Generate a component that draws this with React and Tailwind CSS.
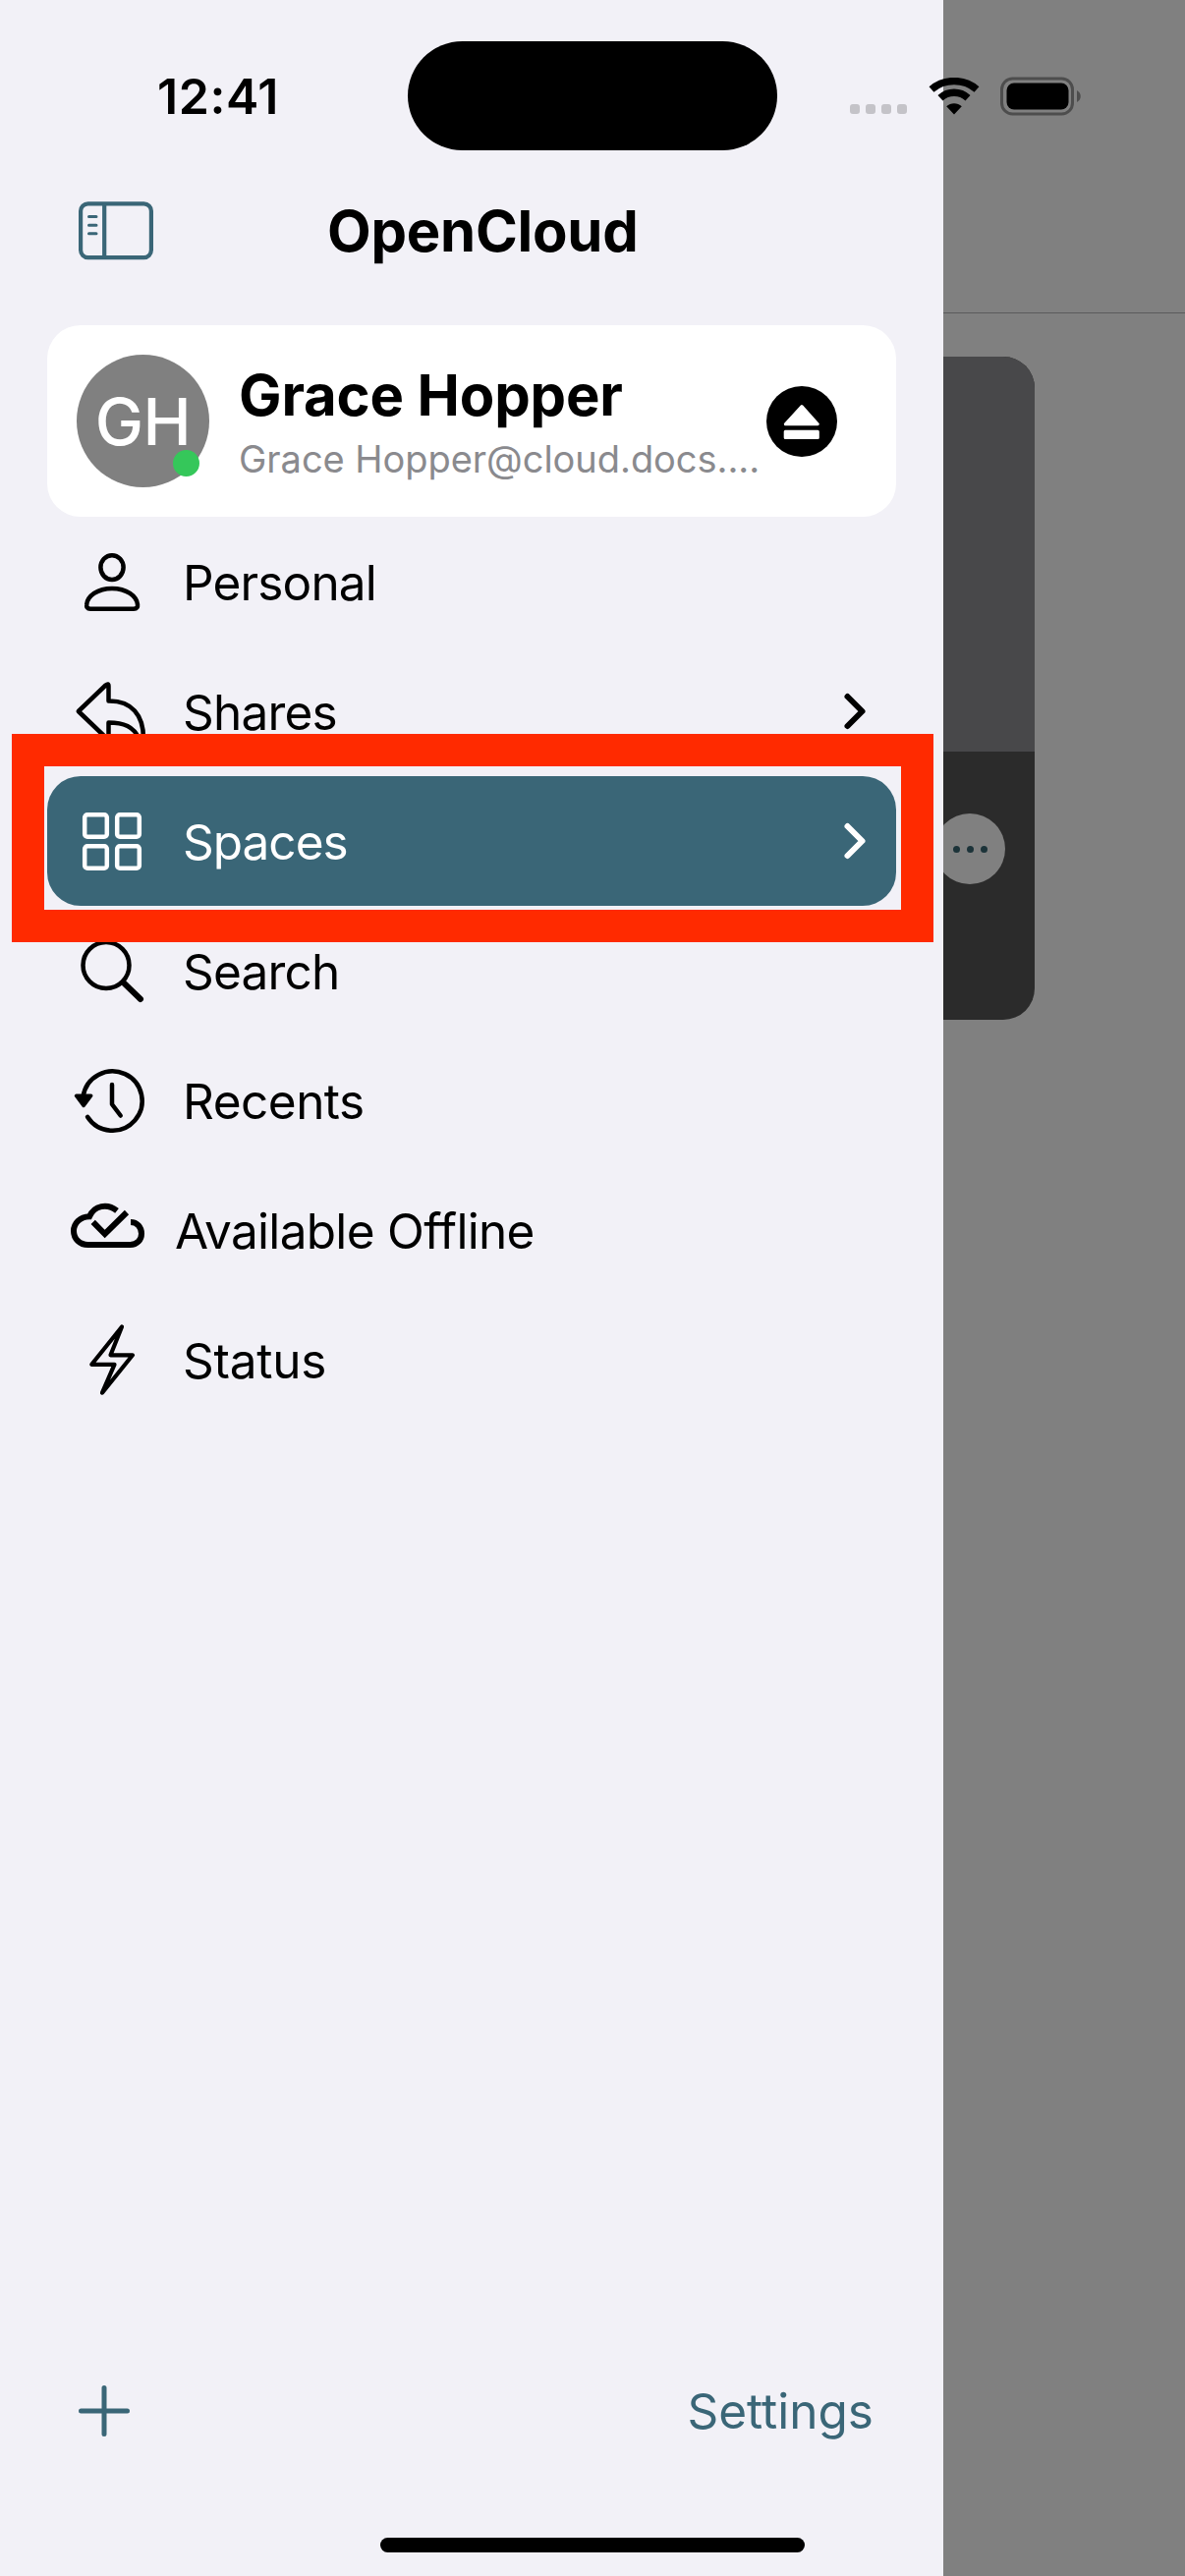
const stroke = {
  fill: "none",
  stroke: "currentColor",
  strokeWidth: 4.5,
  strokeLinecap: "round",
  strokeLinejoin: "round",
};

function Glyph({ children, className = "" }) {
  return (
    <svg viewBox="0 0 84 84" className={`h-[84px] w-[84px] shrink-0 ${className}`} {...stroke}>
      {children}
    </svg>
  );
}

const icons = {
  personal: (
    <Glyph>
      <ellipse cx="42" cy="27.6" rx="11.600" ry="12.4" />
      <path d="M20 69.700H64c3.500 0 4.300-2 4-4.500C67 57 57 48.900 42 48.900S17 57 16.200 65.200c-.3 2.500.5 4.500 3.800 4.500z" />
    </Glyph>
  ),
  shares: (
    <Glyph>
      <path d="M7.800 42 35.500 15.500q3-2.500 3 1V31.500C62 31 74 46 74 69.500c0 4-3 4-4.500.5C64 57.500 54 53.500 38.500 53.500V67.500q0 3.500-3 1z" />
    </Glyph>
  ),
  spaces: (
    <Glyph className="text-white">
      <rect x="14.200" y="15.200" width="22.600" height="22.600" rx="2.800" />
      <rect x="47.200" y="15.200" width="22.600" height="22.600" rx="2.800" />
      <rect x="14.200" y="47.200" width="22.600" height="22.600" rx="2.800" />
      <rect x="47.200" y="47.200" width="22.600" height="22.600" rx="2.800" />
    </Glyph>
  ),
  search: (
    <Glyph>
      <circle cx="36" cy="36.500" r="23.500" />
      <path d="M53.500 54 71 71" strokeWidth="6" />
    </Glyph>
  ),
  recents: (
    <Glyph>
      <path d="M12.600 38A30.200 30.200 0 1 1 17 58.800" />
      <path d="M42 26v20l8.700 11.500" />
      <path d="M5.500 37.300h15.200L13.100 47.500z" fill="currentColor" strokeWidth="3.500" />
    </Glyph>
  ),
  offline: (
    <Glyph>
      <g strokeWidth="6" strokeLinecap="butt" strokeLinejoin="miter">
        <path d="M47 22.300C37 14.500 24 17 19 28.300 9 28.500 3 35.500 3 43c0 8 6.300 14 14.500 14h43C67.500 57 72 52 72 45.700 72 39 67.500 34 61 34" />
        <path d="M22.700 33.800 34.700 46 57 24" />
      </g>
    </Glyph>
  ),
  status: (
    <Glyph>
      <path d="M52 8.500 21.300 46.800H44.500L32 75.700 63 37.300H40.500z" strokeWidth="4.200" />
    </Glyph>
  ),
};

const items = [
  { id: "personal", label: "Personal", text: "ml-[30px] tracking-[-0.85px]" },
  { id: "shares", label: "Shares", text: "ml-[30px] tracking-[-0.8px]", chevron: true },
  { id: "spaces", label: "Spaces", text: "ml-[30px] tracking-[-1px]", chevron: true, active: true },
  { id: "search", label: "Search", text: "ml-[30px] tracking-[-0.8px]" },
  { id: "recents", label: "Recents", text: "ml-[30px] tracking-[-0.5px]" },
  { id: "offline", label: "Available Offline", text: "ml-[22px] tracking-[-0.7px]" },
  { id: "status", label: "Status", text: "ml-[30px] tracking-[-0.25px]" },
];

function Row({ item }) {
  return (
    <li
      className={`flex h-[132px] items-center rounded-[34px] pl-[24px] pr-[29px] ${
        item.active ? "bg-[#3a6677] text-white" : "text-black"
      }`}
    >
      {icons[item.id]}
      <span className={`mt-[4px] flex-1 whitespace-nowrap text-[49.5px] leading-none ${item.text}`}>
        {item.label}
      </span>
      {item.chevron && (
        <svg viewBox="0 0 26 40" className="h-[40px] w-[26px]" {...stroke} strokeWidth="6">
          <path d="M5.500 5 20.500 20 5.500 35" />
        </svg>
      )}
    </li>
  );
}

function AccountCard() {
  return (
    <section className="mx-[48px] flex h-[195px] items-center rounded-[34px] bg-white pl-[30px] pr-[60px]">
      <div className="relative flex size-[135px] shrink-0 items-center justify-center rounded-full bg-[#808080]">
        <span className="mt-px text-[66px] font-medium leading-none tracking-[-0.5px] text-white">GH</span>
        <i className="absolute bottom-[11px] right-[10px] size-[27px] rounded-full bg-[#35c75a]" />
      </div>
      <div className="ml-[30px] mt-[4px] flex w-[537px] flex-col">
        <span className="whitespace-nowrap text-[58px] font-bold leading-[72px] tracking-[-0.15px]">Grace Hopper</span>
        <span className="whitespace-nowrap text-[38px] leading-[58px] tracking-[-0.04px] text-[#8a8a8e]">
          Grace Hopper@cloud.docs....
        </span>
      </div>
      <svg viewBox="0 0 72 72" className="size-[72px] shrink-0">
        <circle cx="36" cy="36" r="36" />
        <g fill="#fff" stroke="#fff" strokeWidth="3" strokeLinejoin="round">
          <path d="M36 20.500 52.300 38.700H19.300z" />
          <path d="M19.200 46.300h33.100v6.200H19.200z" />
        </g>
      </svg>
    </section>
  );
}

function Drawer() {
  return (
    <aside className="flex h-full w-[960px] shrink-0 flex-col bg-[#f2f1f7]">
      <header className="mt-[188px] flex h-[94px] items-center pl-[80px]">
        <svg viewBox="0 0 76 60" className="h-[60px] w-[76px] text-[#3a6677]" {...stroke} strokeWidth="4.200">
          <rect x="2.100" y="2.300" width="71.800" height="54.800" rx="7.500" />
          <path d="M26.200 3v54" />
          <path d="M10.500 15.500h7.500M10.500 24.200h7.500M10.500 32.700h7.500" strokeWidth="3" />
        </svg>
        <h1 className="ml-[177px] whitespace-nowrap text-[58px] font-bold leading-none tracking-[-0.25px]">OpenCloud</h1>
      </header>
      <div className="h-[49px]" />
      <AccountCard />
      <ul className="mx-[48px] flex flex-1 flex-col">
        {items.map((item) => (
          <Row key={item.id} item={item} />
        ))}
      </ul>
      <footer className="mb-[108px] flex h-[120px] items-center justify-between pl-[80px] pr-[71px] text-[#3a6677]">
        <svg viewBox="0 0 52 52" className="size-[52px]" {...stroke} strokeWidth="5">
          <path d="M26 2.500v47M2.500 26h47" />
        </svg>
        <span className="mt-[2px] text-[49.5px] leading-none">Settings</span>
      </footer>
    </aside>
  );
}

function DimmedContent() {
  return (
    <main className="h-full flex-1 overflow-hidden bg-[#808080]">
      <div className="h-[319px] border-b border-[#5a5a5c]" />
      <div className="mt-[44px] h-[675px] w-[93px] overflow-hidden rounded-r-[32px] bg-[#2b2b2b]">
        <div className="h-[402px] bg-[#48484a]" />
        <div className="-ml-[9px] mt-[63px] flex size-[72px] items-center justify-center gap-[7px] rounded-full bg-[#808080]">
          <i className="size-[7px] rounded-full bg-[#1c3339]" />
          <i className="size-[7px] rounded-full bg-[#1c3339]" />
          <i className="size-[7px] rounded-full bg-[#1c3339]" />
        </div>
      </div>
    </main>
  );
}

function StatusBar() {
  return (
    <div className="absolute inset-x-0 top-0 flex h-[194px] items-center">
      <span className="ml-[160px] mt-[2px] w-[255px] text-[50px] font-semibold leading-none tracking-[0.6px]">12:41</span>
      <div className="h-[111px] w-[376px] rounded-[56px] bg-black" />
      <div className="ml-[74px] mt-[28px] flex gap-[6px]">
        <i className="h-[10px] w-[10px] rounded-[3px] bg-[#c4c3c8]" />
        <i className="h-[10px] w-[10px] rounded-[3px] bg-[#c4c3c8]" />
        <i className="h-[10px] w-[10px] rounded-[3px] bg-[#c4c3c8]" />
        <i className="h-[10px] w-[10px] rounded-[3px] bg-[#c4c3c8]" />
      </div>
      <svg viewBox="0 0 52 38" className="ml-[22px] mt-[2px] h-[38px] w-[52px]">
        <path d="M26 37.500 18.200 29.200C22.500 25.300 29.500 25.300 33.800 29.200z" />
        <path d="M12 20.800C20 13.500 32 13.500 40 20.800" fill="none" stroke="#000" strokeWidth="7.500" />
        <path d="M3 12C16 .8 36 .8 49 12" fill="none" stroke="#000" strokeWidth="7.500" />
      </svg>
      <svg viewBox="0 0 84 40" className="ml-[21px] mt-px h-[40px] w-[84px]">
        <rect x="1.500" y="2" width="72" height="36" rx="11" fill="none" stroke="#4d4d4d" strokeWidth="3" />
        <rect x="6.500" y="6.500" width="63" height="27" rx="7.500" />
        <path d="M78 14c5 2.500 5 9.500 0 12z" fill="#4d4d4d" />
      </svg>
    </div>
  );
}

export default function App() {
  return (
    <div className="relative flex h-[2622px] w-[1206px] overflow-hidden font-['Inter',sans-serif] text-black">
      <Drawer />
      <DimmedContent />
      <StatusBar />
      <div className="absolute left-[12px] top-[747px] h-[212px] w-[938px] border-[33px] border-[#ff2a00]" />
      <div className="absolute bottom-[24px] left-[387px] h-[15px] w-[432px] rounded-full bg-black" />
    </div>
  );
}
